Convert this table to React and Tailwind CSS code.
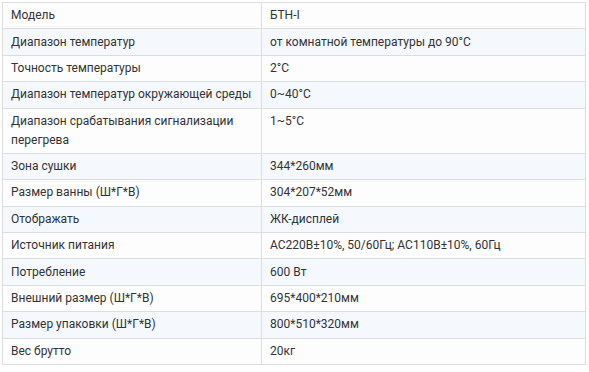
const rows = [
  ["Модель", "БТН-I"],
  ["Диапазон температур", "от комнатной температуры до 90°C"],
  ["Точность температуры", "2°C"],
  ["Диапазон температур окружающей среды", "0~40°C"],
  ["Диапазон срабатывания сигнализации перегрева", "1~5°C"],
  ["Зона сушки", "344*260мм"],
  ["Размер ванны (Ш*Г*В)", "304*207*52мм"],
  ["Отображать", "ЖК-дисплей"],
  ["Источник питания", "AC220B±10%, 50/60Гц; AC110B±10%, 60Гц"],
  ["Потребление", "600 Вт"],
  ["Внешний размер (Ш*Г*В)", "695*400*210мм"],
  ["Размер упаковки (Ш*Г*В)", "800*510*320мм"],
  ["Вес брутто", "20кг"],
];

const App = () => {
  return (
    <div className="w-[589px] h-[372px] bg-white pl-[2px] pt-[2px] font-['Roboto','Liberation_Sans',sans-serif] text-[12px] text-[#333]">
      <table className="w-[584px] border-collapse border border-[#dddddd] table-fixed">
        <colgroup>
          <col className="w-[259px]" />
          <col />
        </colgroup>
        <tbody>
          {rows.map(([name, value], i) => (
            <tr
              key={name}
              className={i % 2 === 1 ? "bg-[#f5f9fe]" : "bg-[#fdfdfd]"}
            >
              <td className="border border-[#dddddd] px-[8px] py-[3.2px] leading-[19px] align-top">
                {name}
              </td>
              <td className="border border-[#dddddd] px-[8px] py-[3.2px] leading-[19px] align-top">
                {value}
              </td>
            </tr>
          ))}
        </tbody>
      </table>
    </div>
  );
};

export default App;
